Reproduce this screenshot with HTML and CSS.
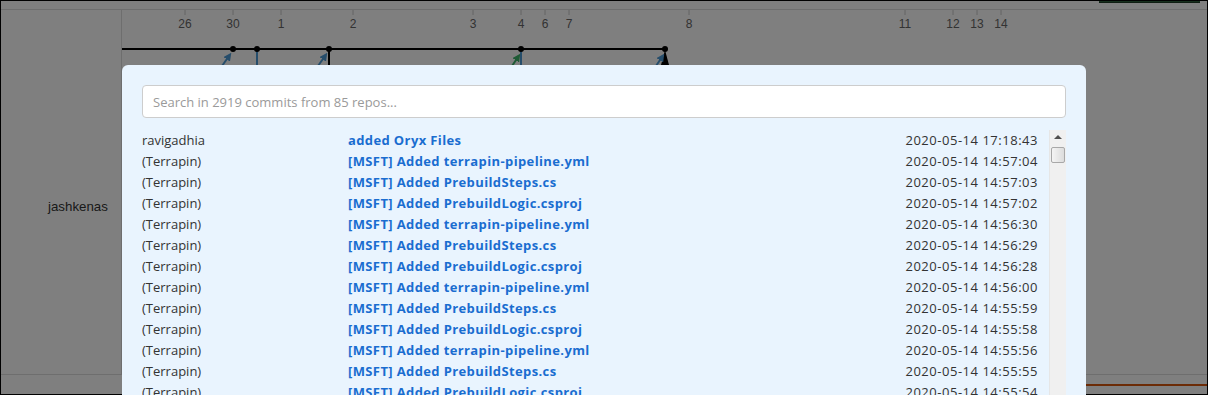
FILE: index.html
```html
<!DOCTYPE html>
<html lang="en">
<head>
    <meta charset="UTF-8">
    <meta name="viewport" content="width=device-width, initial-scale=1.0">
    <title>Commit timeline</title>
    <link rel="stylesheet" href="styles.css">
</head>
<body>
    <div class="topbar">
        <div class="topbtn"></div>
    </div>
    <div class="timeline">
        <div class="names">
            <span class="name">jashkenas</span>
        </div>
        <div class="chart">
            <svg width="1085" height="365" viewBox="0 0 1085 365">
                <g class="ticks">
                    <line x1="63" y1="0" x2="63" y2="5"/>
                    <line x1="111" y1="0" x2="111" y2="5"/>
                    <line x1="159" y1="0" x2="159" y2="5"/>
                    <line x1="231" y1="0" x2="231" y2="5"/>
                    <line x1="351" y1="0" x2="351" y2="5"/>
                    <line x1="399" y1="0" x2="399" y2="5"/>
                    <line x1="423" y1="0" x2="423" y2="5"/>
                    <line x1="447" y1="0" x2="447" y2="5"/>
                    <line x1="567" y1="0" x2="567" y2="5"/>
                    <line x1="783" y1="0" x2="783" y2="5"/>
                    <line x1="831" y1="0" x2="831" y2="5"/>
                    <line x1="855" y1="0" x2="855" y2="5"/>
                    <line x1="879" y1="0" x2="879" y2="5"/>
                </g>
                <g class="labels">
                    <text x="63" y="18">26</text>
                    <text x="111" y="18">30</text>
                    <text x="159" y="18">1</text>
                    <text x="231" y="18">2</text>
                    <text x="351" y="18">3</text>
                    <text x="399" y="18">4</text>
                    <text x="423" y="18">6</text>
                    <text x="447" y="18">7</text>
                    <text x="567" y="18">8</text>
                    <text x="783" y="18">11</text>
                    <text x="831" y="18">12</text>
                    <text x="855" y="18">13</text>
                    <text x="879" y="18">14</text>
                </g>
                <defs>
                    <marker id="headBlue" markerWidth="4" markerHeight="4" refX="2" refY="2" orient="auto">
                        <path d="M0,0 L4,2 L0,4 z" fill="#4d9bd6"/>
                    </marker>
                    <marker id="headGreen" markerWidth="4" markerHeight="4" refX="2" refY="2" orient="auto">
                        <path d="M0,0 L4,2 L0,4 z" fill="#3cb46a"/>
                    </marker>
                </defs>
                <line class="track" x1="0" y1="39" x2="543" y2="39"/>
                <line class="blue" x1="135" y1="40" x2="135" y2="60"/>
                <line class="black" x1="207" y1="40" x2="207" y2="60"/>
                <line class="blue" x1="399" y1="40" x2="399" y2="60"/>
                <path d="M543,40 L547,55 L539,55 z" fill="#000"/>
                <line class="arrow" x1="100" y1="56" x2="107" y2="46" marker-end="url(#headBlue)"/>
                <line class="arrow" x1="196" y1="56" x2="203" y2="46" marker-end="url(#headBlue)"/>
                <line class="arrow green" x1="390" y1="56" x2="396" y2="47" marker-end="url(#headGreen)"/>
                <line class="arrow" x1="534" y1="56" x2="540" y2="47" marker-end="url(#headBlue)"/>
                <circle cx="111" cy="39" r="3"/>
                <circle cx="135" cy="39" r="3"/>
                <circle cx="207" cy="39" r="3"/>
                <circle cx="399" cy="39" r="3"/>
                <circle cx="543" cy="39" r="3"/>
            </svg>
        </div>
    </div>
    <div class="footer">
        <div class="footer-left"></div>
        <div class="footer-chart"><div class="progress"></div></div>
    </div>

    <div class="overlay">
        <div class="modal">
            <input class="search" type="text" placeholder="Search in 2919 commits from 85 repos...">
            <div class="results">
                <div class="list" id="list"></div>
                <div class="scrollbar">
                    <div class="scroll-up"></div>
                    <div class="thumb"></div>
                </div>
            </div>
        </div>
    </div>

    <script>
        var commits = [
            ['ravigadhia', 'added Oryx Files', '2020-05-14 17:18:43'],
            ['(Terrapin)', '[MSFT] Added terrapin-pipeline.yml', '2020-05-14 14:57:04'],
            ['(Terrapin)', '[MSFT] Added PrebuildSteps.cs', '2020-05-14 14:57:03'],
            ['(Terrapin)', '[MSFT] Added PrebuildLogic.csproj', '2020-05-14 14:57:02'],
            ['(Terrapin)', '[MSFT] Added terrapin-pipeline.yml', '2020-05-14 14:56:30'],
            ['(Terrapin)', '[MSFT] Added PrebuildSteps.cs', '2020-05-14 14:56:29'],
            ['(Terrapin)', '[MSFT] Added PrebuildLogic.csproj', '2020-05-14 14:56:28'],
            ['(Terrapin)', '[MSFT] Added terrapin-pipeline.yml', '2020-05-14 14:56:00'],
            ['(Terrapin)', '[MSFT] Added PrebuildSteps.cs', '2020-05-14 14:55:59'],
            ['(Terrapin)', '[MSFT] Added PrebuildLogic.csproj', '2020-05-14 14:55:58'],
            ['(Terrapin)', '[MSFT] Added terrapin-pipeline.yml', '2020-05-14 14:55:56'],
            ['(Terrapin)', '[MSFT] Added PrebuildSteps.cs', '2020-05-14 14:55:55'],
            ['(Terrapin)', '[MSFT] Added PrebuildLogic.csproj', '2020-05-14 14:55:54']
        ];
        var list = document.querySelector('#list');
        for (var i = 0; i < commits.length; i++) {
            var row = document.createElement('div');
            row.className = 'row';
            row.innerHTML = '<span class="author">' + commits[i][0] + '</span>'
                + '<a class="msg" href="#">' + commits[i][1] + '</a>'
                + '<span class="date">' + commits[i][2] + '</span>';
            list.appendChild(row);
        }
    </script>
</body>
</html>
```

FILE: styles.css
```css
* {
    box-sizing: border-box;
}
body {
    margin: 0;
    height: 395px;
    border: 1px solid #000;
    overflow: hidden;
    background: #fff;
    font-family: "Liberation Sans", Arial, sans-serif;
}
.topbar {
    height: 8px;
    display: flex;
    justify-content: flex-end;
    padding-right: 7px;
}
.topbtn {
    width: 101px;
    height: 2px;
    background: #2f5e3a;
    border-bottom: 1px solid #1e3d25;
}
.timeline {
    display: flex;
    height: 366px;
    border-top: 1px solid #dcdcdc;
    border-bottom: 1px solid #dcdcdc;
}
.names {
    width: 121px;
    border-right: 1px solid #dcdcdc;
    padding: 187px 0 0 47px;
    flex-shrink: 0;
}
.name {
    font-size: 13.3px;
    color: #333;
}
.chart {
    flex: 1;
}
.chart svg {
    display: block;
}
.ticks line {
    stroke: #c8c8c8;
    stroke-width: 1;
}
.labels text {
    font-family: "Liberation Sans", Arial, sans-serif;
    font-size: 12px;
    fill: #666;
    text-anchor: middle;
}
.track {
    stroke: #000;
    stroke-width: 2;
}
.chart circle {
    fill: #000;
}
.blue {
    stroke: #4d9bd6;
    stroke-width: 2;
}
.black {
    stroke: #000;
    stroke-width: 2;
}
.arrow {
    stroke: #4d9bd6;
    stroke-width: 2;
}
.arrow.green {
    stroke: #3cb46a;
}
.footer {
    display: flex;
    height: 20px;
}
.footer-left {
    width: 121px;
    flex-shrink: 0;
}
.footer-chart {
    flex: 1;
    padding-top: 9px;
}
.progress {
    height: 2px;
    background: #d8560c;
}

/* modal */
.overlay {
    position: fixed;
    top: 0;
    left: 0;
    right: 0;
    bottom: 0;
    background: rgba(0, 0, 0, 0.5);
    display: flex;
    justify-content: center;
    align-items: flex-start;
    padding-top: 65px;
}
.modal {
    width: 964px;
    height: 400px;
    background: #e9f4fe;
    border-radius: 6px;
    padding: 20px 20px 0;
    font-family: "Open Sans", "Noto Sans", sans-serif;
    font-size: 13px;
}
.search {
    display: block;
    width: 100%;
    height: 33px;
    border: 1px solid #cdcdcd;
    border-radius: 4px;
    padding: 0 10px;
    font-family: "Open Sans", "Noto Sans", sans-serif;
    font-size: 13px;
    color: #333;
    background: #fff;
}
.search::placeholder {
    color: #9a9a9a;
}
.results {
    display: flex;
    margin-top: 12px;
    height: 300px;
}
.list {
    flex: 1;
    overflow: hidden;
    padding-right: 11px;
}
.row {
    display: flex;
    height: 21px;
    line-height: 21px;
    white-space: nowrap;
}
.author {
    width: 206px;
    color: #333;
}
.msg {
    flex: 1;
    color: #1a6dd0;
    font-weight: bold;
    letter-spacing: 0.38px;
    text-decoration: none;
}
.date {
    color: #333;
    letter-spacing: 0.52px;
}
.scrollbar {
    width: 17px;
    background: #f0f0f0;
    border-left: 1px solid #e6e6e6;
    padding-top: 5px;
}
.scroll-up {
    width: 0;
    height: 0;
    margin: 0 auto;
    border-left: 4px solid transparent;
    border-right: 4px solid transparent;
    border-bottom: 4px solid #505050;
}
.thumb {
    margin: 8px auto 0;
    width: 14px;
    height: 16px;
    border: 1px solid #a8a8a8;
    border-radius: 2px;
    background: linear-gradient(to right, #f4f4f4, #dcdcdc);
}
```
